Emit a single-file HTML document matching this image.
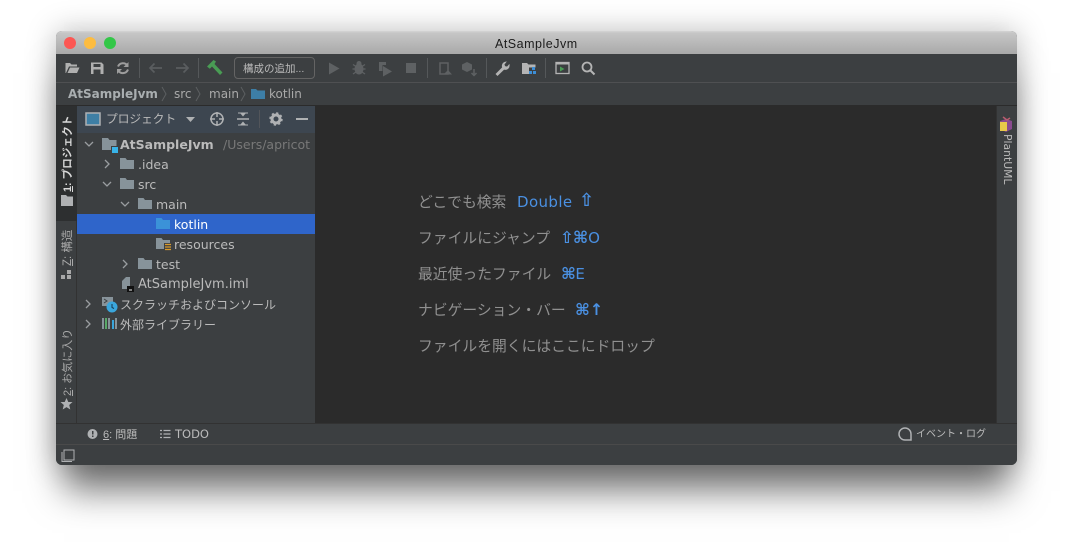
<!DOCTYPE html>
<html><head><meta charset="utf-8">
<style>
html,body{margin:0;padding:0;width:1073px;height:545px;overflow:hidden;background:#fff}
*{box-sizing:border-box}
body{font-family:"Liberation Sans","Noto Sans CJK JP",sans-serif;position:relative}
.a{position:absolute}
.t{position:absolute;white-space:nowrap;font-size:12.5px;line-height:16px;color:#bbbbbb;z-index:6}
.l{font-family:"DejaVu Sans",sans-serif;font-size:12.5px}
.shadow{position:absolute;left:56px;top:31px;width:961px;height:434px;border-radius:6px;box-shadow:0 34px 34px -8px rgba(0,0,0,.52),0 0 30px rgba(0,0,0,.26)}
.win{position:absolute;left:56px;top:31px;width:961px;height:434px;border-radius:6px;overflow:hidden;background:#3c3f41}
svg{position:absolute;overflow:visible;z-index:5}
.v{position:absolute;white-space:nowrap;font-size:11px;line-height:14px;color:#bbb;transform-origin:0 0;z-index:6}
.w{position:absolute;white-space:nowrap;font-size:14.8px;line-height:18px;color:#909090;left:418px;z-index:6}
.b{position:absolute;white-space:nowrap;font-family:"DejaVu Sans",sans-serif;font-size:15px;line-height:18px;color:#4a90e2;z-index:6}
</style></head><body>
<div class="shadow"></div>
<div class="win"></div>
<!-- title bar -->
<div class="a" style="left:56px;top:31px;width:961px;height:23px;border-radius:6px 6px 0 0;background:linear-gradient(#d4d4d4 0,#c6c6c6 2px,#a9a9a9 100%)"></div>
<div class="a" style="left:64px;top:37px;width:12px;height:12px;border-radius:50%;background:#fc5753"></div>
<div class="a" style="left:84px;top:37px;width:12px;height:12px;border-radius:50%;background:#fdbc40"></div>
<div class="a" style="left:104px;top:37px;width:12px;height:12px;border-radius:50%;background:#33c748"></div>
<div class="t" style="left:495px;top:36px;color:#1c1c1c;font-size:12.5px;letter-spacing:.5px">AtSampleJvm</div>
<!-- toolbar -->
<div class="a" style="left:56px;top:54px;width:961px;height:29px;background:#3c3f41;border-bottom:1px solid #4f5052"></div>
<svg style="left:0;top:0" width="1073" height="545" viewBox="0 0 1073 545">
<!-- open folder -->
<path d="M65.500 73V63h4.500l1.500 1.500h5.500v2H69l-3 6.500zM67.500 73l2.500-5.500h9.500L77 73z" fill="#b0b0b0"/>
<!-- save -->
<path d="M91 62.500h10.500l2 2V74H91z" fill="#b0b0b0"/><rect x="93.500" y="64" width="7" height="3" fill="#3c3f41"/><rect x="93.500" y="69.500" width="7" height="4.500" fill="#3c3f41"/>
<!-- sync -->
<path d="M118 66.500a5.500 5.500 0 0 1 9.500-1M128 69.500a5.500 5.500 0 0 1-9.500 1.500" fill="none" stroke="#9d9d9d" stroke-width="2"/><path d="M128.500 62v5h-5zM117 74v-5h5z" fill="#9d9d9d"/>
<rect x="139" y="58" width="1" height="20" fill="#55585a"/>
<!-- arrows -->
<path d="M150 68h12M154.500 63.500 150 68l4.500 4.500" fill="none" stroke="#5a5d5f" stroke-width="1.700"/>
<path d="M188 68h-12M183.500 63.500 188 68l-4.500 4.500" fill="none" stroke="#5a5d5f" stroke-width="1.700"/>
<rect x="198" y="58" width="1" height="20" fill="#55585a"/>
<!-- hammer -->
<path d="M207 66.500 213.500 60l2.500 1.500-1.500 2.500 8 8.500-2.500 2.500-8-8.500-2.200 2.300z" fill="#499c54"/>
<!-- run etc -->
<path d="M329 62.500 339.500 68.500 329 74.500z" fill="#5e6163"/>
<ellipse cx="359" cy="69" rx="4.500" ry="5.500" fill="#5e6163"/><path d="M353 64.500l3 2M365 64.500l-3 2M352.500 69h13M353 74l3-2M365 74l-3-2" stroke="#5e6163" stroke-width="1.300"/><circle cx="359" cy="63.500" r="2.500" fill="#5e6163"/>
<path d="M379 62h7v3h-3.500v6H379zM383 66l9 5.500-9 5z" fill="#5e6163"/>
<rect x="406" y="63" width="10" height="10" fill="#5e6163"/>
<rect x="427" y="58" width="1" height="20" fill="#55585a"/>
<rect x="440" y="63" width="8" height="11" fill="none" stroke="#5e6163" stroke-width="1.500"/><path d="M444 74l4-4 4 4.500h-8z" fill="#5e6163"/>
<path d="M467 62l5 2.500v5l-5 2.500-5-2.500v-5z" fill="#5e6163"/><path d="M474 69v6M471.500 73l2.500 2.500 2.500-2.500" stroke="#5e6163" stroke-width="1.500" fill="none"/>
<rect x="486" y="58" width="1" height="20" fill="#55585a"/>
<!-- wrench -->
<path d="M497.500 75.500l-1.500-1.500 6.500-6.500c-.8-2.200 0-5 3.500-5.500l-2 2.500 1 2 2.200.5 2-2.300c.5 3.300-2.300 5.500-5.200 4.600z" fill="#b4b4b4" stroke="#b4b4b4" stroke-width=".7"/>
<!-- project structure -->
<path d="M522 63h5l1.500 1.500h7V74H522z" fill="#b4b4b4"/><rect x="529" y="67.500" width="8" height="8" fill="#3c3f41"/><rect x="532" y="67" width="3" height="3" fill="#3d8ed6"/><rect x="529" y="71" width="3" height="3" fill="#3d8ed6"/><rect x="533" y="71" width="3" height="3" fill="#3d8ed6"/>
<rect x="545" y="58" width="1" height="20" fill="#55585a"/>
<!-- terminal/run -->
<rect x="556" y="62.500" width="13" height="11" fill="none" stroke="#b4b4b4" stroke-width="1.300"/><rect x="556" y="62" width="13" height="2.500" fill="#b4b4b4"/><path d="M560 66.500l4.500 2.500-4.500 2.500z" fill="#499c54"/>
<!-- search -->
<circle cx="587" cy="67" r="4.500" fill="none" stroke="#b4b4b4" stroke-width="1.800"/><path d="M590.500 70.500l4 4" stroke="#b4b4b4" stroke-width="2"/>
<!-- nav chevrons -->
<path d="M162 87l4 7-4 7M196 87l4 7-4 7M241 87l4 7-4 7" fill="none" stroke="#5c5f61"/>
<path d="M251 89h5l1.500 1.500h7.500V99h-14z" fill="#3d7ea6"/>
</svg>
<div class="a" style="left:234px;top:57px;width:81px;height:22px;border:1px solid #646464;border-radius:4px"></div>
<div class="t" style="left:243px;top:61px;font-size:10.500px;color:#bbb">構成の追加...</div>
<!-- nav -->
<div class="a" style="left:56px;top:83px;width:961px;height:22px;background:#3c3f41"></div>
<div class="t l" style="left:68px;top:86px;font-weight:700;font-size:12px;color:#a9aeb0">AtSampleJvm</div>
<div class="t l" style="left:174px;top:86px;font-size:12px;color:#a9a9a9">src</div>
<div class="t l" style="left:209px;top:86px;font-size:12px;color:#a9a9a9">main</div>
<div class="t l" style="left:269px;top:86px;font-size:12px;color:#a9a9a9">kotlin</div>
<!-- separators -->
<div class="a" style="left:56px;top:105px;width:961px;height:1px;background:#2b2b2b"></div>
<!-- left strip -->
<div class="a" style="left:56px;top:106px;width:21px;height:317px;background:#3c3f41;border-right:1px solid #323232"></div>
<div class="a" style="left:56px;top:106px;width:21px;height:115px;background:#2d2f30"></div>
<!-- project panel -->
<div class="a" style="left:77px;top:106px;width:239px;height:317px;background:#3c3f41;border-right:1px solid #2b2b2b"></div>
<div class="a" style="left:77px;top:106px;width:238px;height:27px;background:#3d4650"></div>
<div class="a" style="left:77px;top:214px;width:238px;height:20px;background:#2f65ca"></div>
<!-- editor -->
<div class="a" style="left:316px;top:106px;width:681px;height:317px;background:#2b2b2b"></div>
<div class="a" style="left:996px;top:106px;width:21px;height:317px;background:#3c3f41;border-left:1px solid #323232"></div>
<!-- bottom -->
<div class="a" style="left:56px;top:423px;width:961px;height:42px;background:#3c3f41;border-top:1px solid #323232;border-radius:0 0 6px 6px"></div>
<div class="a" style="left:56px;top:444px;width:961px;height:1px;background:#4a4a4a"></div>
<!-- vertical labels -->
<div class="v" style="left:61px;top:192px;transform:rotate(-90deg);color:#d8d8d8;font-weight:700;font-size:10.7px"><u>1</u>: プロジェクト</div>
<div class="v" style="left:61px;top:266px;transform:rotate(-90deg);color:#a8a8a8;font-size:11.5px"><u>Z</u>: 構造</div>
<div class="v" style="left:61px;top:396px;transform:rotate(-90deg);color:#a8a8a8"><u>2</u>: お気に入り</div>
<div class="t l" style="left:1014px;top:134px;font-size:10.8px;line-height:14px;transform-origin:0 0;transform:rotate(90deg);color:#bbb">PlantUML</div>
<!-- panel header -->
<div class="t" style="left:106px;top:112px;font-size:11.7px;color:#bbb">プロジェクト</div>
<!-- tree -->
<div class="t l" style="left:120px;top:137px;font-weight:700;font-size:12.5px;color:#bbb">AtSampleJvm</div>
<div class="t l" style="left:223px;top:137px;width:92px;overflow:hidden;color:#787878">/Users/apricot</div>
<div class="t l" style="left:138px;top:157px">.idea</div>
<div class="t l" style="left:138px;top:177px">src</div>
<div class="t l" style="left:156px;top:197px">main</div>
<div class="t l" style="left:174px;top:217px;color:#fff">kotlin</div>
<div class="t l" style="left:174px;top:237px">resources</div>
<div class="t l" style="left:156px;top:257px">test</div>
<div class="t l" style="left:138px;top:277px;font-size:13px">AtSampleJvm.iml</div>
<div class="t" style="left:120px;top:297px;font-size:12px">スクラッチおよびコンソール</div>
<div class="t" style="left:120px;top:317px;font-size:12px">外部ライブラリー</div>
<svg style="left:0;top:0" width="1073" height="545" viewBox="0 0 1073 545">
<!-- side icons -->
<path d="M61 195h5l1.500 1.500H73V206H61z" fill="#afb1b3"/>
<path d="M67 270h4v4h-4zM61 275h4v4h-4zM67 275h4v4h-4z" fill="#a8a8a8"/>
<path d="M66.500 398l1.800 4h4.200l-3.300 3 1.100 4.500-3.800-2.400-3.800 2.400 1.100-4.500-3.300-3h4.200z" fill="#afb1b3"/>
<!-- header icons -->
<rect x="86" y="113" width="14" height="12" fill="#3e7fa5" stroke="#afb1b3" stroke-width="1.500"/>
<path d="M186 117h9l-4.500 5z" fill="#afb1b3"/>
<circle cx="217" cy="119" r="6" fill="none" stroke="#afb1b3" stroke-width="1.500"/><path d="M217 112v5M217 121v5M210 119h5M219 119h5" stroke="#afb1b3" stroke-width="1.500"/>
<path d="M237 119h12" stroke="#afb1b3" stroke-width="1.500"/><path d="M240 113h6l-3 3.500zM240 125h6l-3-3.500z" fill="#afb1b3"/><path d="M238 113h10M238 125h10" stroke="#afb1b3"/>
<rect x="259" y="110" width="1" height="18" fill="#52555a"/>
<circle cx="276" cy="119" r="4" fill="none" stroke="#afb1b3" stroke-width="3"/><circle cx="276" cy="119" r="5.800" fill="none" stroke="#afb1b3" stroke-width="1.800" stroke-dasharray="2.200 2.350"/>
<rect x="296" y="118" width="12" height="2" fill="#afb1b3"/>
<!-- chevrons -->
<g fill="none" stroke="#9a9da0" stroke-width="1.300">
<path d="M85 142l4 4 4-4M103 182l4 4 4-4M121 202l4 4 4-4"/>
<path d="M105 160l4 4-4 4M123 260l4 4-4 4M86 300l4 4-4 4M86 320l4 4-4 4"/>
</g>
<!-- folders -->
<path d="M102 138h6l1.500 2h7v10H102z" fill="#87939a"/><rect x="111" y="146" width="7" height="7" fill="#3c3f41"/><rect x="112" y="147" width="6" height="6" fill="#38b3e8"/>
<path d="M120 158h5.500l1.500 2h7v9h-14z" fill="#87939a"/>
<path d="M120 178h5.500l1.500 2h7v9h-14z" fill="#87939a"/>
<path d="M138 198h5.500l1.500 2h7v9h-14z" fill="#87939a"/>
<path d="M156 218h5.500l1.500 2h7v9h-14z" fill="#3b92d8"/>
<path d="M156 238h5.500l1.500 2h7v9h-14z" fill="#87939a"/><rect x="164" y="243" width="7" height="8" fill="#3c3f41"/><path d="M165 244.500h6M165 247h6M165 249.500h6" stroke="#d99a2b" stroke-width="1.200"/>
<path d="M138 258h5.500l1.500 2h7v9h-14z" fill="#87939a"/>
<!-- iml -->
<path d="M126 277h4v12h-8v-8z" fill="#87939a"/><rect x="127" y="286" width="7" height="6" fill="#111"/><rect x="129" y="289.500" width="3" height="1" fill="#eee"/>
<!-- scratches -->
<path d="M102 297h11v9h-11z" fill="#87939a"/><path d="M104 299l3 2-3 2" stroke="#3c3f41" fill="none"/>
<circle cx="112" cy="307" r="5.500" fill="#3aa6dc"/><path d="M112 304v3.500l2 1" stroke="#16384e" fill="none"/>
<!-- libs -->
<rect x="102" y="318" width="2" height="11" fill="#87939a"/><rect x="105" y="318" width="2" height="11" fill="#59a869"/><rect x="108" y="318" width="2" height="11" fill="#87939a"/><rect x="112" y="320" width="2" height="9" fill="#3aa6dc"/><rect x="115" y="318" width="2" height="11" fill="#87939a"/>
<!-- plantuml -->
<path d="M1000 121l6-2 6 2v8l-6 3-6-3z" fill="#8a4a8f"/><path d="M1000 122h7v9h-7z" fill="#e8c84a"/><path d="M1003 117l4 3 3-2" stroke="#b85c6e" stroke-width="1.500" fill="none"/>
<!-- bottom icons -->
<circle cx="92.500" cy="434" r="5" fill="#afb1b3"/><rect x="92" y="431" width="1.500" height="3.500" fill="#3c3f41"/><rect x="92" y="435.500" width="1.500" height="1.500" fill="#3c3f41"/>
<path d="M160 430.500h2M160 434h2M160 437.500h2M163.500 430.500h7M163.500 434h7M163.500 437.500h7" stroke="#afb1b3" stroke-width="1.300"/>
<path d="M911 440h-6a6 6 0 1 1 6-6z" fill="none" stroke="#afb1b3" stroke-width="1.500"/>
<rect x="64" y="450" width="10" height="10" fill="none" stroke="#afb1b3"/><path d="M62 452v9.500h10" fill="none" stroke="#afb1b3"/>
</svg>
<div class="t" style="left:103px;top:427px;font-size:11px;color:#bbb"><u>6</u>: 問題</div>
<div class="t l" style="left:175px;top:426px;font-size:11.5px;color:#bbb">TODO</div>
<div class="t" style="left:916px;top:427px;font-size:10px;color:#bbb">イベント・ログ</div>
<!-- welcome -->
<div class="w" style="top:194px">どこでも検索</div><div class="b" style="left:517px;top:193px;letter-spacing:.4px">Double</div><div class="b" style="left:579px;top:192px;font-weight:700;font-size:18px">⇧</div>
<div class="w" style="top:230px">ファイルにジャンプ</div><div class="b" style="left:560px;top:229px;font-weight:700;letter-spacing:-1px;font-size:16.5px">⇧⌘<span style="font-weight:400;font-size:15px;margin-left:1px">O</span></div>
<div class="w" style="top:266px">最近使ったファイル</div><div class="b" style="left:561px;top:265px;font-weight:700;letter-spacing:-.5px;font-size:16px">⌘<span style="font-weight:400;font-size:15px">E</span></div>
<div class="w" style="top:302px">ナビゲーション・バー</div><div class="b" style="left:575px;top:301px;font-weight:700;letter-spacing:0;font-size:16px">⌘↑</div>
<div class="w" style="top:338px">ファイルを開くにはここにドロップ</div>
</body></html>
